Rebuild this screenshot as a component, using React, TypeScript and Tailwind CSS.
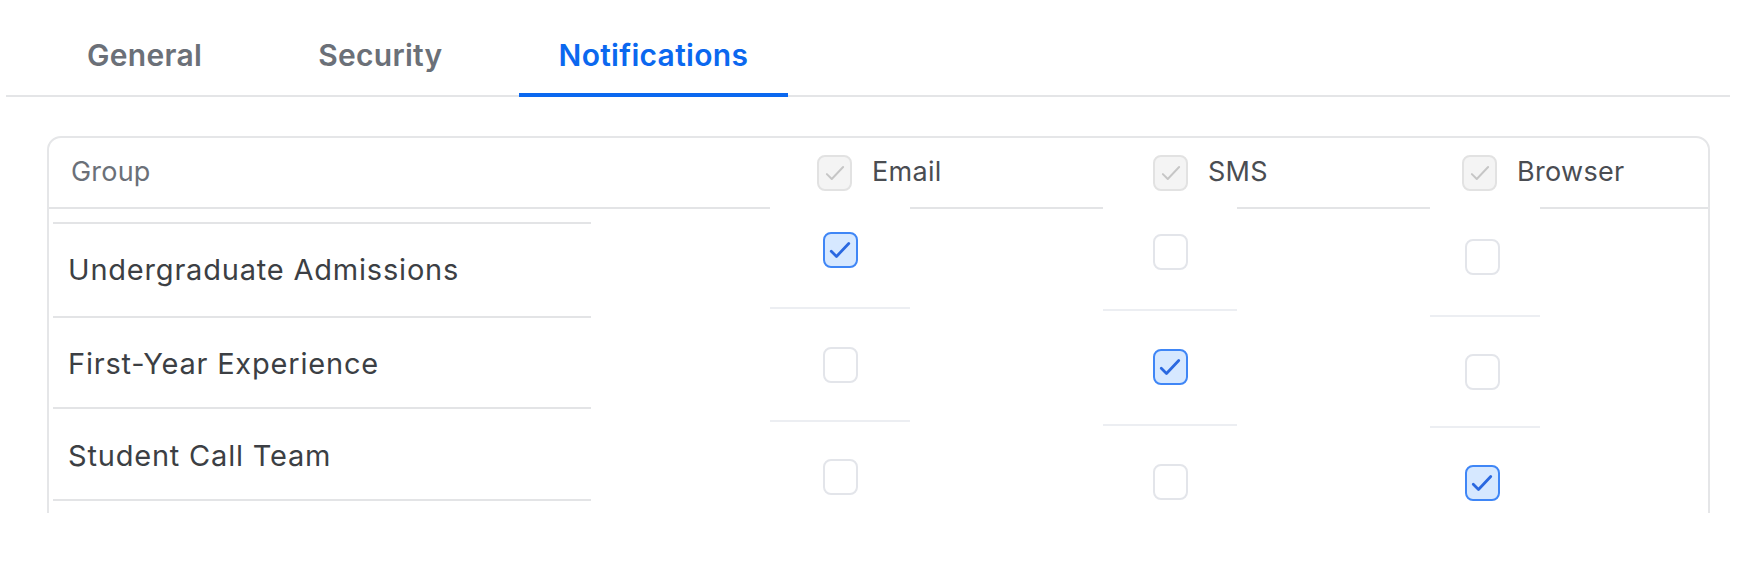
import { ReactNode } from "react";

type BoxState = "on" | "off" | "muted";

const boxStyles: Record<BoxState, string> = {
  on: "border-[#3f86f6] bg-[#d6e8ff] text-[#2a68e0]",
  off: "border-[#e3e5ea] bg-white text-transparent",
  muted: "border-[#e2e2e2] bg-[#f4f4f4] text-[#c6c6c6]",
};

const CheckBox = ({ state }: { state: BoxState }) => (
  <span
    className={`flex h-[36px] w-[35px] shrink-0 items-center justify-center rounded-[8px] border-2 ${boxStyles[state]}`}
  >
    {state !== "off" && (
      <svg
        viewBox="0 0 24 24"
        className={state === "on" ? "h-[28px] w-[28px]" : "h-[26px] w-[26px]"}
        fill="none"
        stroke="currentColor"
        strokeWidth={state === "on" ? 2.4 : 1.8}
        strokeLinecap="round"
        strokeLinejoin="round"
      >
        <path d="M4.5 13l4.5 4.5L19.5 6.5" />
      </svg>
    )}
  </span>
);

const Rule = ({ className = "" }: { className?: string }) => (
  <div className={`h-[2px] w-full shrink-0 ${className}`} />
);

const Tab = ({ label, active }: { label: string; active?: boolean }) => (
  <button
    className={`-mb-[2px] border-b-4 px-10 pt-[38px] pb-[20px] text-[30px] leading-[35px] font-semibold tracking-[0.3px] ${
      active ? "border-[#0b68ef] text-[#0b68ef]" : "border-transparent text-[#6b7078]"
    }`}
  >
    {label}
  </button>
);

const HeadCell = ({ children, className }: { children: ReactNode; className: string }) => (
  <div className={`flex items-center gap-[20px] text-[27px] tracking-[0.3px] text-[#4a4d52] ${className}`}>
    {children}
  </div>
);

// each channel column: checkbox, divider, checkbox, divider, checkbox
interface ChannelCol {
  key: string;
  className: string;
  boxShift: string;
  values: boolean[];
  gaps: string[];
}

const channels: ChannelCol[] = [
  {
    key: "email",
    className: "ml-[179px] w-[140px]",
    boxShift: "",
    values: [true, false, false],
    gaps: ["mt-[23px]", "mt-[39px]", "mt-[38px]", "mt-[37px]", "mt-[37px]"],
  },
  {
    key: "sms",
    className: "ml-[193px] w-[134px]",
    boxShift: "",
    values: [false, true, false],
    gaps: ["mt-[25px]", "mt-[39px]", "mt-[38px]", "mt-[39px]", "mt-[38px]"],
  },
  {
    key: "browser",
    className: "ml-[193px] w-[110px]",
    boxShift: "mr-[6px]",
    values: [false, false, true],
    gaps: ["mt-[30px]", "mt-[40px]", "mt-[37px]", "mt-[36px]", "mt-[37px]"],
  },
];

const groups = [
  { name: "Undergraduate Admissions", h: "h-[94px]" },
  { name: "First-Year Experience", h: "h-[91px]" },
  { name: "Student Call Team", h: "h-[92px]" },
];

export default function App() {
  return (
    <div className="h-[582px] w-full bg-white font-['Inter',sans-serif]">
      <nav className="ml-[6px] mr-[20px] flex gap-9 border-b-2 border-[#e4e5e7] pl-[41px]">
        <Tab label="General" />
        <Tab label="Security" />
        <Tab label="Notifications" active />
      </nav>

      <div className="mt-[39px] ml-[47px] mr-[40px] h-[377px] overflow-hidden">
        <div className="h-[420px] rounded-[14px] border-2 border-[#e5e6e8]">
          {/* header */}
          <div className="flex h-[69px] items-center">
            <div className="w-[721px] pl-[22px] text-[27px] tracking-[0.2px] text-[#6b7078]">Group</div>
            <HeadCell className="w-[333px] pl-[47px]">
              <CheckBox state="muted" />
              Email
            </HeadCell>
            <HeadCell className="w-[327px] pl-[50px]">
              <CheckBox state="muted" />
              SMS
            </HeadCell>
            <HeadCell className="pl-[32px]">
              <CheckBox state="muted" />
              Browser
            </HeadCell>
          </div>
          <div className="flex h-[2px]">
            <div className="w-[721px] bg-[#e3e4e6]" />
            <div className="ml-[140px] w-[193px] bg-[#e3e4e6]" />
            <div className="ml-[134px] w-[193px] bg-[#e3e4e6]" />
            <div className="ml-[110px] flex-1 bg-[#e3e4e6]" />
          </div>

          {/* body */}
          <div className="flex items-start">
            <div className="mt-[13px] ml-[4px] w-[538px]">
              <Rule className="bg-[#e3e4e6]" />
              {groups.map((g, i) => (
                <div
                  key={g.name}
                  className={`flex ${g.h} items-center border-b-2 border-[#e3e4e6] pl-[15px] text-[29px] tracking-[0.8px] text-[#3c3f44] ${
                    i === 0 ? "" : "pt-[3px]"
                  }`}
                >
                  {g.name}
                </div>
              ))}
            </div>

            {channels.map((c) => (
              <div key={c.key} className={`flex flex-col items-center ${c.className}`}>
                <div className={`${c.gaps[0]} ${c.boxShift}`}>
                  <CheckBox state={c.values[0] ? "on" : "off"} />
                </div>
                <Rule className={`${c.gaps[1]} bg-[#eceef2]`} />
                <div className={`${c.gaps[2]} ${c.boxShift}`}>
                  <CheckBox state={c.values[1] ? "on" : "off"} />
                </div>
                <Rule className={`${c.gaps[3]} bg-[#eceef2]`} />
                <div className={`${c.gaps[4]} ${c.boxShift}`}>
                  <CheckBox state={c.values[2] ? "on" : "off"} />
                </div>
              </div>
            ))}
          </div>
        </div>
      </div>
    </div>
  );
}
